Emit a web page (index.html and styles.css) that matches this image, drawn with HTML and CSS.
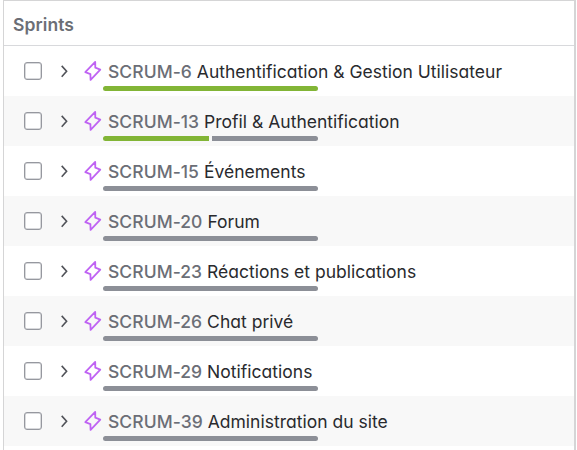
FILE: index.html
```
<!DOCTYPE html>
<html lang="fr">
<head>
<meta charset="utf-8">
<title>Sprints</title>
<link rel="stylesheet" href="styles.css">
</head>
<body>
<svg class="defs" aria-hidden="true">
  <symbol id="chevron" viewBox="0 0 10 14"><path d="M1.7 1.9 6.6 7.3 1.7 12.7"/></symbol>
  <symbol id="bolt" viewBox="0 0 18 22"><path d="M11.2 1.9 1.3 12.2 6.4 14.1 6.6 19.9 16.3 9.6 11.3 7.7Z"/></symbol>
</svg>
<main class="panel">
  <h1 class="header">Sprints</h1>
  <ul class="list">
    <li class="row"><span class="checkbox"></span><svg class="chevron"><use href="#chevron"/></svg><svg class="bolt"><use href="#bolt"/></svg><div class="item"><p class="text"><span class="key">SCRUM-6</span> <span class="title">Authentification &amp; Gestion Utilisateur</span></p><div class="bar"><i class="done"></i></div></div></li>
    <li class="row"><span class="checkbox"></span><svg class="chevron"><use href="#chevron"/></svg><svg class="bolt"><use href="#bolt"/></svg><div class="item"><p class="text"><span class="key">SCRUM-13</span> <span class="title">Profil &amp; Authentification</span></p><div class="bar"><i class="done"></i><i class="todo"></i></div></div></li>
    <li class="row"><span class="checkbox"></span><svg class="chevron"><use href="#chevron"/></svg><svg class="bolt"><use href="#bolt"/></svg><div class="item"><p class="text"><span class="key">SCRUM-15</span> <span class="title">Événements</span></p><div class="bar"><i class="todo"></i></div></div></li>
    <li class="row"><span class="checkbox"></span><svg class="chevron"><use href="#chevron"/></svg><svg class="bolt"><use href="#bolt"/></svg><div class="item"><p class="text"><span class="key">SCRUM-20</span> <span class="title">Forum</span></p><div class="bar"><i class="todo"></i></div></div></li>
    <li class="row"><span class="checkbox"></span><svg class="chevron"><use href="#chevron"/></svg><svg class="bolt"><use href="#bolt"/></svg><div class="item"><p class="text"><span class="key">SCRUM-23</span> <span class="title">Réactions et publications</span></p><div class="bar"><i class="todo"></i></div></div></li>
    <li class="row"><span class="checkbox"></span><svg class="chevron"><use href="#chevron"/></svg><svg class="bolt"><use href="#bolt"/></svg><div class="item"><p class="text"><span class="key">SCRUM-26</span> <span class="title">Chat privé</span></p><div class="bar"><i class="todo"></i></div></div></li>
    <li class="row"><span class="checkbox"></span><svg class="chevron"><use href="#chevron"/></svg><svg class="bolt"><use href="#bolt"/></svg><div class="item"><p class="text"><span class="key">SCRUM-29</span> <span class="title">Notifications</span></p><div class="bar"><i class="todo"></i></div></div></li>
    <li class="row"><span class="checkbox"></span><svg class="chevron"><use href="#chevron"/></svg><svg class="bolt"><use href="#bolt"/></svg><div class="item"><p class="text"><span class="key">SCRUM-39</span> <span class="title">Administration du site</span></p><div class="bar"><i class="todo"></i></div></div></li>
  </ul>
</main>
</body>
</html>
```
FILE: styles.css
```
* { box-sizing: border-box; }
body {
  margin: 0;
  height: 450px;
  overflow: hidden;
  background: #fff;
  font-family: Inter, "Liberation Sans", sans-serif;
  font-feature-settings: "cv11";
}
.defs { display: block; width: 0; height: 0; }
.panel {
  width: 573px;
  height: 450px;
  margin-left: 3px;
  border: solid #d5d5d6;
  border-width: 1px 2px 0 1px;
}
.header {
  height: 45px;
  margin: 0;
  padding: 1px 0 0 9px;
  border-bottom: 1px solid #d8d9dc;
  color: #6b6e76;
  font-size: 17.5px;
  font-weight: 600;
  letter-spacing: 0.1px;
  line-height: 45px;
}
.list { margin: 0; padding: 0; list-style: none; }
.row { display: flex; height: 50px; }
.row:nth-child(even) { background: #f8f8f8; }
.checkbox {
  width: 18px;
  height: 18px;
  margin: 16px 0 0 20px;
  border: 1px solid #96989f;
  border-radius: 3px;
  background: #fff;
  box-shadow: inset 0 0 0 0.5px #b4b6bb;
}
.chevron {
  width: 10px;
  height: 14px;
  margin: 18px 0 0 18px;
  fill: none;
  stroke: #505258;
  stroke-width: 1.6;
}
.bolt {
  width: 18px;
  height: 22px;
  margin: 14px 0 0 14px;
  fill: none;
  stroke: #bf63f3;
  stroke-width: 1.8;
  stroke-linejoin: round;
}
.item { padding: 14px 0 0 1px; }
.text {
  height: 26px;
  margin: 0;
  padding-left: 5px;
  color: #292a2e;
  font-size: 17.5px;
  line-height: 24px;
  white-space: nowrap;
}
.key { color: #6b6e76; font-weight: 460; letter-spacing: 0.05px; }
.title { letter-spacing: 0.015px; }
.bar {
  display: flex;
  gap: 3px;
  width: 215px;
  height: 5px;
  border-radius: 3px;
  overflow: hidden;
}
.bar i { flex: 1; }
.done { background: #82b536; }
.todo { background: #8c8f97; }
```
